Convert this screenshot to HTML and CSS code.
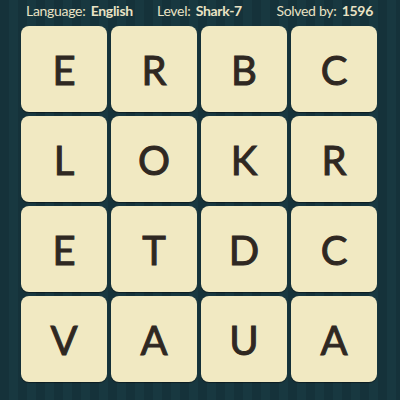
FILE: index.html
```html
<!DOCTYPE html>
<html>
<head>
<meta charset="utf-8">
<link rel="stylesheet" href="styles.css">
</head>
<body>
<div class="page">
  <div class="header">
    <span class="item left">Language: <b>English</b></span>
    <span class="item mid">Level: <b>Shark-7</b></span>
    <span class="item right">Solved by: <b>1596</b></span>
  </div>
  <div class="grid">
    <div class="tile">E</div><div class="tile">R</div><div class="tile">B</div><div class="tile">C</div>
    <div class="tile">L</div><div class="tile">O</div><div class="tile">K</div><div class="tile">R</div>
    <div class="tile">E</div><div class="tile">T</div><div class="tile">D</div><div class="tile">C</div>
    <div class="tile">V</div><div class="tile">A</div><div class="tile">U</div><div class="tile">A</div>
  </div>
</div>
</body>
</html>
```

FILE: styles.css
```css
html, body {
  margin: 0;
  padding: 0;
}
body {
  width: 400px;
  height: 400px;
  overflow: hidden;
  background-color: #15323a;
  background-image: repeating-linear-gradient(90deg, #15323a 0px, #15323a 9px, #183840 9px, #183840 18px);
  font-family: Lato, "Liberation Sans", sans-serif;
}
.page {
  padding: 0 22px 0 21px;
}
.header {
  height: 26px;
  display: grid;
  grid-template-columns: 1fr auto 1fr;
  align-items: center;
  padding: 0 5px 5px 5px;
  color: #e9e2c4;
  font-size: 14px;
  letter-spacing: -0.3px;
  line-height: 1;
  box-sizing: border-box;
}
.header .left { justify-self: start; }
.header .mid { justify-self: center; }
.header .right { justify-self: end; }
.header b {
  font-weight: 700;
  margin-left: 2px;
}
.grid {
  display: grid;
  grid-template-columns: repeat(4, 86px);
  grid-template-rows: repeat(4, 86px);
  gap: 4px;
}
.tile {
  background: #f1e9c2;
  border-radius: 8px;
  box-shadow: 0 1px 1px rgba(0,0,0,0.45);
  display: flex;
  align-items: center;
  justify-content: center;
  color: #2f2822;
  font-size: 40px;
  font-weight: 400;
  -webkit-text-stroke: 1px #2f2822;
  padding-top: 1px;
  box-sizing: border-box;
}
```
